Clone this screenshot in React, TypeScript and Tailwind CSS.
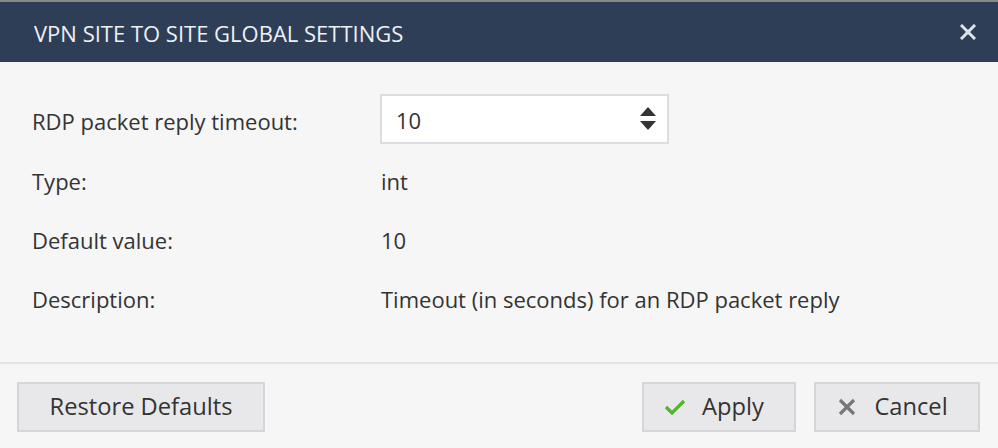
import React from "react";

export default function App() {
  const rows = [
    { label: "Type:", value: "int" },
    { label: "Default value:", value: "10" },
    { label: "Description:", value: "Timeout (in seconds) for an RDP packet reply" },
  ];
  return (
    <div
      className="w-[998px] h-[448px] bg-[#f6f6f6] flex flex-col overflow-hidden text-[#333333]"
      style={{ fontFamily: '"Open Sans", sans-serif' }}
    >
      <div className="h-[2px] bg-[#8a8a8a]" />
      <div className="h-[60px] bg-[#2f3e57] flex items-center justify-between pl-[34px] pr-[22px]">
        <div className="text-[#eef1f5] text-[22px] leading-none pt-[2px]">VPN SITE TO SITE GLOBAL SETTINGS</div>
        <svg width="16" height="16" viewBox="0 0 16 16" className="text-[#dfe4ec]">
          <path d="M2 2 L14 14 M14 2 L2 14" stroke="currentColor" strokeWidth="3" strokeLinecap="square" />
        </svg>
      </div>
      <div className="flex flex-col pl-[32px] pt-[32px] flex-1">
        <div className="flex items-center h-[50px]">
          <div className="w-[348px] text-[22px] pt-[4px]">RDP packet reply timeout:</div>
          <div className="w-[289px] h-[50px] bg-white border-2 border-[#dcdce2] flex items-center justify-between pl-[14px] pr-[10px]">
            <span className="text-[22px] pt-[2px]">10</span>
            <svg width="18" height="28" viewBox="0 0 18 28" className="text-[#333]">
              <path d="M9 2 L17 11 L1 11 Z" fill="currentColor" />
              <path d="M1 16 L17 16 L9 25 Z" fill="currentColor" />
            </svg>
          </div>
        </div>
        <div className="h-[8px]" />
        {rows.map((r) => (
          <div key={r.label} className="flex items-center h-[59px]">
            <div className="w-[348px] text-[22px]">{r.label}</div>
            <div className="text-[22px] pl-[1px]">{r.value}</div>
          </div>
        ))}
      </div>
      <div className="h-[2px] bg-[#e1e3ea]" />
      <div className="flex items-center justify-between pl-[17px] pr-[18px] h-[84px] pt-[2px]">
        <button className="w-[248px] h-[50px] bg-[#e8e8ea] border-2 border-[#d6d6da] text-[23.7px] text-[#333]">
          Restore Defaults
        </button>
        <div className="flex gap-[18px]">
          <button className="w-[154px] h-[50px] bg-[#e8e8ea] border-2 border-[#d6d6da] text-[23.7px] text-[#333] flex items-center justify-center gap-[16px] pr-[10px]">
            <svg width="22" height="16" viewBox="0 0 22 16">
              <path d="M2 8 L8 14 L20 2" stroke="#52b52a" strokeWidth="3.2" fill="none" />
            </svg>
            <span>Apply</span>
          </button>
          <button className="w-[166px] h-[50px] bg-[#e8e8ea] border-2 border-[#d6d6da] text-[23.7px] text-[#333] flex items-center justify-center gap-[18px] pr-[8px]">
            <svg width="18" height="18" viewBox="0 0 18 18">
              <path d="M2 2 L16 16 M16 2 L2 16" stroke="#777" strokeWidth="3.2" />
            </svg>
            <span>Cancel</span>
          </button>
        </div>
      </div>
    </div>
  );
}
